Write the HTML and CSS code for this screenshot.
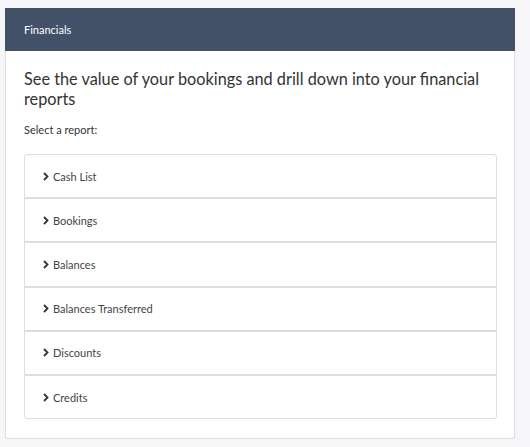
FILE: index.html
```html
<!DOCTYPE html>
<html>
<head>
<meta charset="utf-8">
<link rel="stylesheet" href="styles.css">
</head>
<body>
<div class="card">
  <div class="card-header">Financials</div>
  <div class="card-body">
    <h2 class="title">See the value of your bookings and drill down into your financial reports</h2>
    <p class="hint">Select a report:</p>
    <ul class="reports">
      <li class="report"><svg class="chev" viewBox="0 0 6 9" width="6" height="9"><path d="M1 1 L4.5 4.5 L1 8" fill="none" stroke="#333" stroke-width="1.8"/></svg><span>Cash List</span></li>
      <li class="report"><svg class="chev" viewBox="0 0 6 9" width="6" height="9"><path d="M1 1 L4.5 4.5 L1 8" fill="none" stroke="#333" stroke-width="1.8"/></svg><span>Bookings</span></li>
      <li class="report"><svg class="chev" viewBox="0 0 6 9" width="6" height="9"><path d="M1 1 L4.5 4.5 L1 8" fill="none" stroke="#333" stroke-width="1.8"/></svg><span>Balances</span></li>
      <li class="report"><svg class="chev" viewBox="0 0 6 9" width="6" height="9"><path d="M1 1 L4.5 4.5 L1 8" fill="none" stroke="#333" stroke-width="1.8"/></svg><span>Balances Transferred</span></li>
      <li class="report"><svg class="chev" viewBox="0 0 6 9" width="6" height="9"><path d="M1 1 L4.5 4.5 L1 8" fill="none" stroke="#333" stroke-width="1.8"/></svg><span>Discounts</span></li>
      <li class="report"><svg class="chev" viewBox="0 0 6 9" width="6" height="9"><path d="M1 1 L4.5 4.5 L1 8" fill="none" stroke="#333" stroke-width="1.8"/></svg><span>Credits</span></li>
    </ul>
  </div>
</div>
</body>
</html>
```

FILE: styles.css
```css
html, body {
  margin: 0;
  padding: 0;
  background: #f6f6f8;
  font-family: Lato, "Open Sans", sans-serif;
}
.card {
  margin: 8px 0 0 5px;
  width: 508px;
  background: #fff;
  border: 1px solid #dcdcdc;
  border-top: none;
  border-radius: 0 0 3px 3px;
}
.card-header {
  background: #435168;
  color: #fff;
  font-size: 11px;
  height: 43px;
  line-height: 43px;
  padding-left: 19px;
  margin: 0 -1px;
}
.card-body {
  padding: 18px 17px 19px 18px;
}
.title {
  margin: 0;
  font-size: 16.3px;
  font-weight: 400;
  line-height: 20px;
  color: #333;
}
.hint {
  margin: 14px 0 17px;
  font-size: 11px;
  line-height: 14px;
  color: #333;
}
.reports {
  list-style: none;
  margin: 0;
  padding: 0;
  display: flex;
  flex-direction: column;
}
.report {
  display: flex;
  align-items: center;
  gap: 4px;
  height: 42.2px;
  padding-left: 18px;
  border: 1px solid #dedede;
  font-size: 11px;
  color: #444;
}
.report:first-child { border-radius: 3px 3px 0 0; }
.report:last-child { border-radius: 0 0 3px 3px; }
.chev { display: block; }
```
